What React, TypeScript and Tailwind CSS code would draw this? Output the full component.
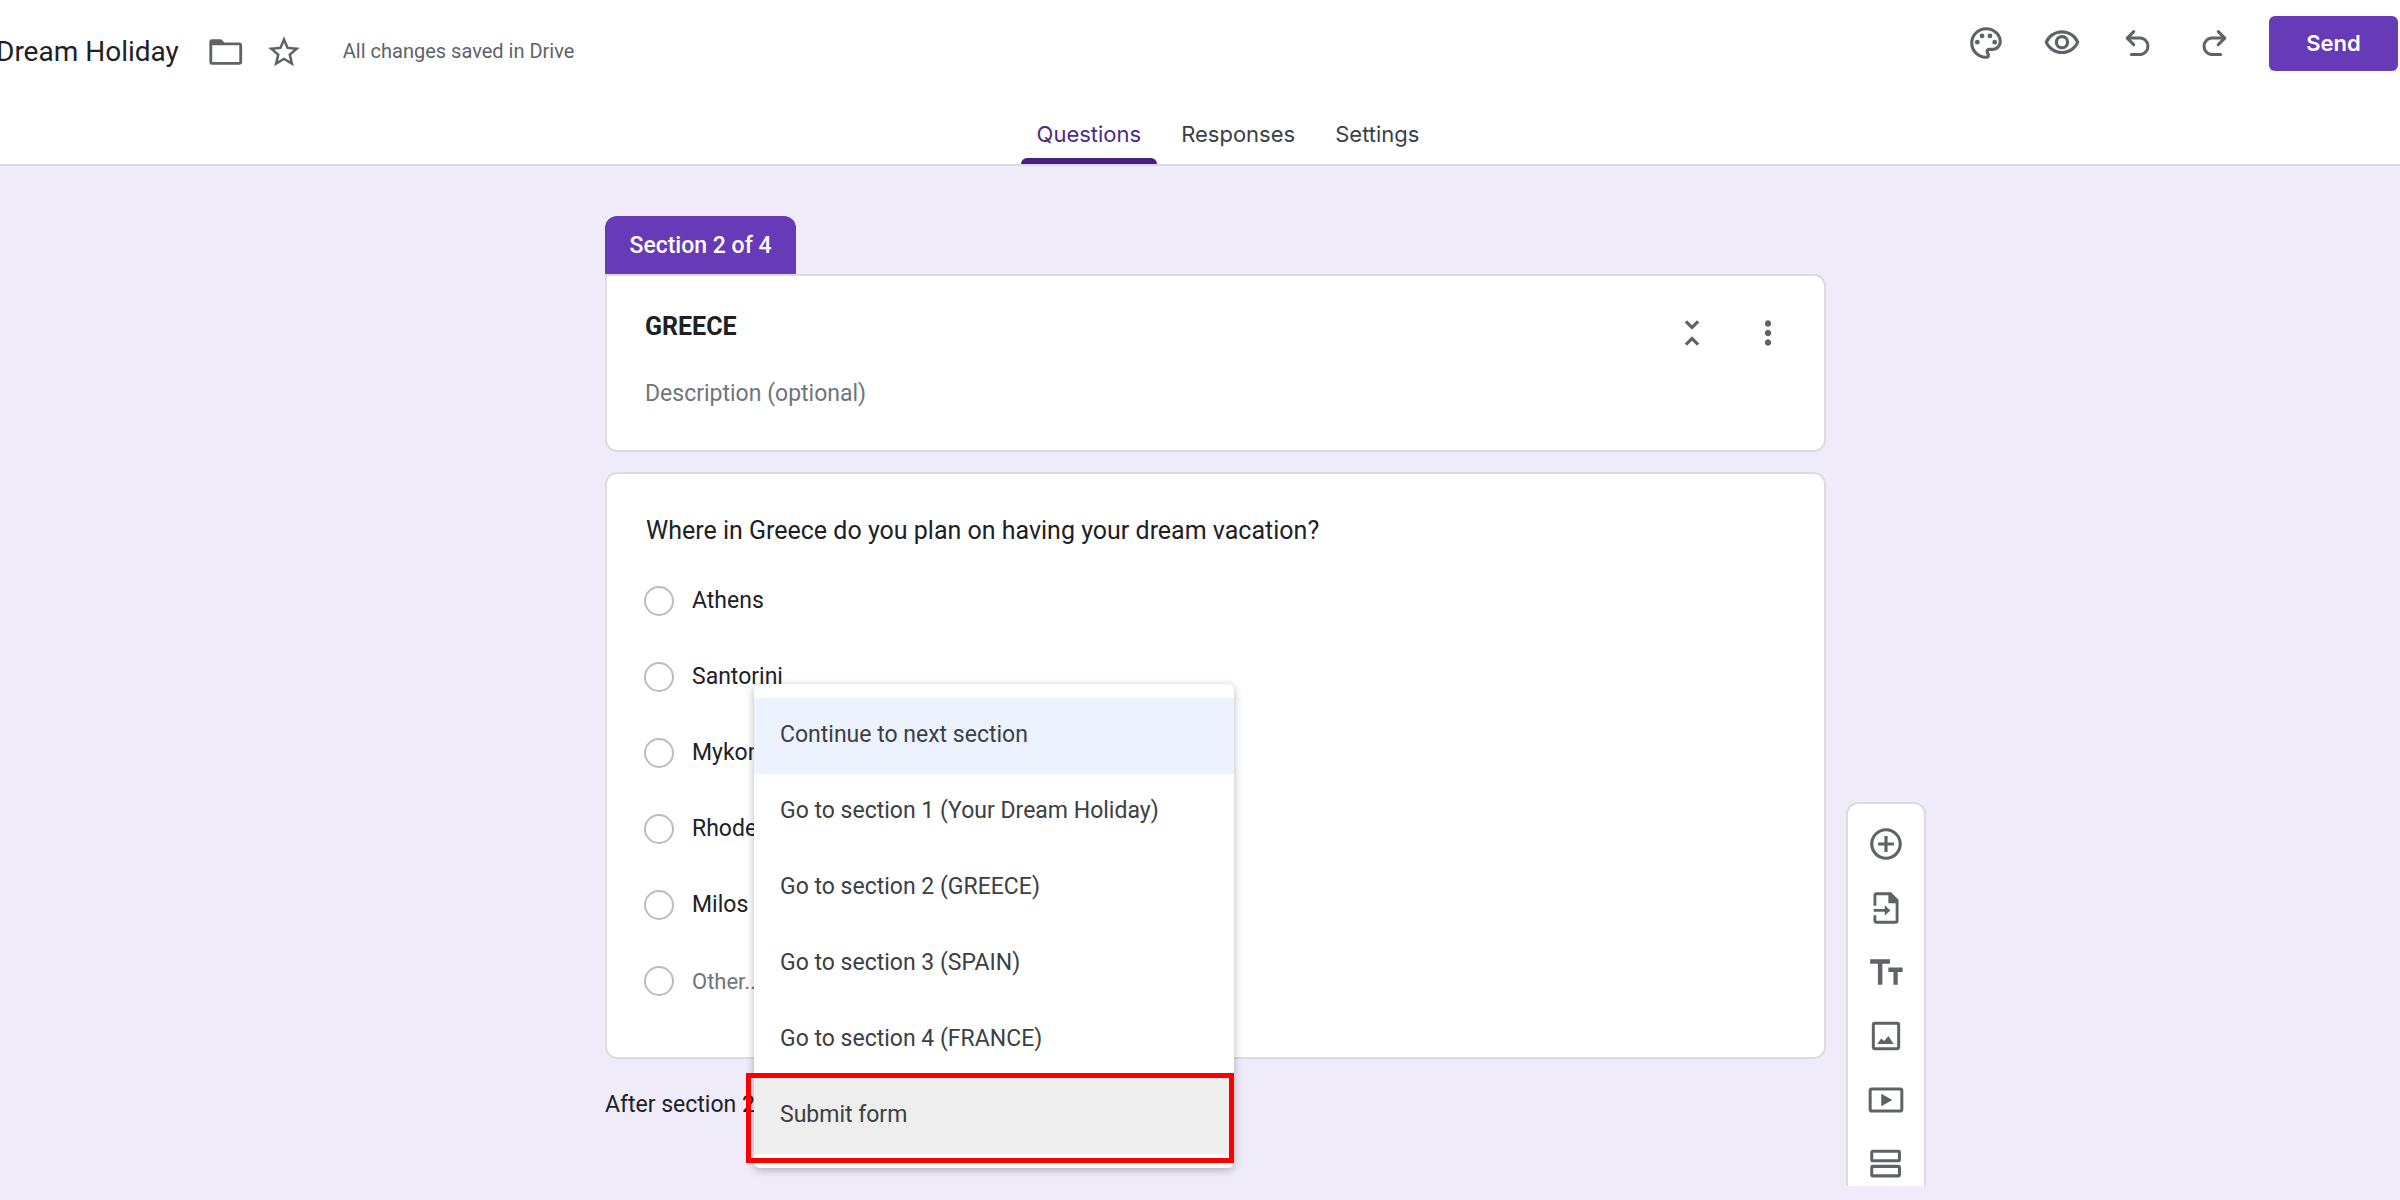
import React from 'react';
import {
  MdStarOutline,
  MdOutlinePalette,
  MdOutlineVisibility,
  MdUnfoldLess,
  MdMoreVert,
  MdAddCircleOutline,
} from 'react-icons/md';

interface IconProps {
  className?: string;
}

const iconSize = 'w-[38px] h-[38px]';

const FolderIcon: React.FC<IconProps> = ({ className }) => (
  <svg viewBox="0 0 24 24" className={className}>
    <path d="M1.500 5.600C1.500 4.700 2.200 4 3.100 4H9l2 2H20.500c.9 0 1.700.8 1.700 1.700V18.500c0 .9-.8 1.600-1.700 1.600H3.100c-.9 0-1.600-.7-1.600-1.600zM3.300 7.800V18.300H20.400V7.800z" fill="currentColor" fillRule="evenodd" />
  </svg>
);

const UndoIcon: React.FC<IconProps> = ({ className }) => (
  <svg viewBox="0 0 24 24" fill="none" stroke="currentColor" strokeWidth="1.9" strokeLinecap="round" strokeLinejoin="round" className={className}>
    <path d="M9.300 4.800 5.200 8.900l4.100 4.100" />
    <path d="M5.400 8.900h8.400a5.200 5.200 0 0 1 0 10.300H7.800" />
  </svg>
);

const RedoIcon: React.FC<IconProps> = ({ className }) => (
  <svg viewBox="0 0 24 24" fill="none" stroke="currentColor" strokeWidth="1.9" strokeLinecap="round" strokeLinejoin="round" className={className}>
    <path d="m14.700 4.800 4.100 4.100-4.100 4.100" />
    <path d="M18.600 8.900h-8.400a5.200 5.200 0 0 0 0 10.300h6" />
  </svg>
);

const ImportIcon: React.FC<IconProps> = ({ className }) => (
  <svg viewBox="0 0 24 24" className={className}>
    <path d="M5 10.500V4a1 1 0 0 1 1-1h8.800L19 7.200V20a1 1 0 0 1-1 1H6a1 1 0 0 1-1-1v-3.500" fill="none" stroke="currentColor" strokeWidth="1.800" />
    <path d="M13.500 2.500V9H20z" fill="currentColor" />
    <path d="M4.200 12.600h7v-2.300l3.600 3.200-3.600 3.200v-2.300h-7z" fill="currentColor" />
  </svg>
);

const TextIcon: React.FC<IconProps> = ({ className }) => (
  <svg viewBox="0 0 24 24" fill="currentColor" className={className}>
    <path d="M2 4v2.800h4.900V20h2.800V6.800h4.800V4zM22.500 9.200h-9V12h3.200v8h2.700v-8h3.100z" />
  </svg>
);

const ImageIcon: React.FC<IconProps> = ({ className }) => (
  <svg viewBox="0 0 24 24" className={className}>
    <rect x="4" y="4" width="16" height="16" rx="1" fill="none" stroke="currentColor" strokeWidth="1.900" />
    <path d="M6.500 17l2.500-3.500 1.900 1.700 2.600-3.200L16.900 17z" fill="currentColor" />
  </svg>
);

const VideoIcon: React.FC<IconProps> = ({ className }) => (
  <svg viewBox="0 0 24 24" className={className}>
    <rect x="2" y="5" width="20" height="14" rx="1" fill="none" stroke="currentColor" strokeWidth="1.900" />
    <path d="M9 8v8l7-4z" fill="currentColor" />
  </svg>
);

const SectionIcon: React.FC<IconProps> = ({ className }) => (
  <svg viewBox="0 0 24 24" fill="none" stroke="currentColor" strokeWidth="1.900" className={className}>
    <rect x="3" y="4" width="17.500" height="6" rx="0.500" />
    <rect x="3" y="13.500" width="17.500" height="6" rx="0.500" />
  </svg>
);

const tabs = ['Questions', 'Responses', 'Settings'];

const options = ['Athens', 'Santorini', 'Mykonos', 'Rhodes', 'Milos', 'Other...'];

const destinations = [
  'Continue to next section',
  'Go to section 1 (Your Dream Holiday)',
  'Go to section 2 (GREECE)',
  'Go to section 3 (SPAIN)',
  'Go to section 4 (FRANCE)',
  'Submit form',
];

const headerActions = [
  { label: 'Customize theme', Icon: MdOutlinePalette },
  { label: 'Preview', Icon: MdOutlineVisibility },
  { label: 'Undo', Icon: UndoIcon },
  { label: 'Redo', Icon: RedoIcon },
];

const tools = [
  { label: 'Add question', Icon: MdAddCircleOutline },
  { label: 'Import questions', Icon: ImportIcon },
  { label: 'Add title and description', Icon: TextIcon },
  { label: 'Add image', Icon: ImageIcon },
  { label: 'Add video', Icon: VideoIcon },
  { label: 'Add section', Icon: SectionIcon },
];

const Header: React.FC = () => (
  <header className="bg-white border-b-2 border-[#dddae3]">
    <div className="flex items-start justify-between h-[104px]">
      <div className="flex items-center h-[104px]">
        <h1 className="-ml-1 text-[28px] leading-8 text-[#202124] whitespace-nowrap">Dream Holiday</h1>
        <button aria-label="Move to folder" className="ml-7 text-[#5f6368]">
          <FolderIcon className={iconSize} />
        </button>
        <button aria-label="Star" className="ml-5 text-[#5f6368]">
          <MdStarOutline className={iconSize} />
        </button>
        <p className="ml-10 pb-0.5 text-xl text-[#5f6368]">All changes saved in Drive</p>
      </div>
      <div className="flex items-start pt-4">
        <div className="flex items-center gap-[38px] h-[55px] pb-0.5 mr-9 text-[#5f6368]">
          {headerActions.map(({ label, Icon }) => (
            <button key={label} aria-label={label}>
              <Icon className={iconSize} />
            </button>
          ))}
        </div>
        <button className="w-[129px] h-[55px] mr-0.5 rounded-md bg-[#673ab7] text-white font-['Inter',sans-serif] font-semibold text-[22px]">
          Send
        </button>
      </div>
    </div>
    <nav className="flex justify-center gap-2 h-[60px] pl-[56px] font-['Inter',sans-serif] text-[22px]">
      {tabs.map((tab, index) => (
        <a
          key={tab}
          href="#"
          className={`flex flex-col justify-between px-4 pt-3 ${index === 0 ? 'text-[#4c2b87]' : 'text-[#3c4043]'}`}
        >
          <span className="leading-9">{tab}</span>
          {index === 0 && <span className="h-1.5 -mx-4 rounded-t-md bg-[#47217f]" />}
        </a>
      ))}
    </nav>
  </header>
);

const SectionCard: React.FC = () => (
  <section>
    <div className="w-[191px] h-[58px] pt-0.5 flex items-center justify-center rounded-t-xl bg-[#673ab7] text-white font-medium text-[23px]">
      Section 2 of 4
    </div>
    <div className="flex justify-between h-[178px] pl-[38px] pr-[37px] bg-white border-2 border-[#dadce0] rounded-xl rounded-tl-none">
      <div className="flex flex-col flex-1 pt-[33px]">
        <h2 className="text-[25px] leading-9 font-bold text-[#202124]">GREECE</h2>
        <input
          aria-label="Description"
          placeholder="Description (optional)"
          className="mt-7 h-10 w-full text-[23px] outline-none placeholder:text-[#70757a]"
        />
      </div>
      <div className="flex items-start gap-[38px] pt-[38px] text-[#5f6368]">
        <button aria-label="Collapse section">
          <MdUnfoldLess className={iconSize} />
        </button>
        <button aria-label="More options">
          <MdMoreVert className={iconSize} />
        </button>
      </div>
    </div>
  </section>
);

const QuestionCard: React.FC = () => (
  <fieldset className="mt-5 pl-[37px] pt-[37px] pb-[38px] bg-white border-2 border-[#dadce0] rounded-xl text-[#202124]">
    <p className="pl-0.5 text-[25px] leading-10">Where in Greece do you plan on having your dream vacation?</p>
    <div className="mt-3">
      {options.map((option) => (
        <label key={option} className="flex items-center gap-[18px] h-[76px]">
          <input type="radio" name="place" className="appearance-none w-[30px] h-[30px] rounded-full border-2 border-[#bdbdbd]" />
          <span className={option === 'Other...' ? 'text-[22px] text-[#70757a]' : 'text-[23px]'}>{option}</span>
        </label>
      ))}
    </div>
  </fieldset>
);

const DestinationMenu: React.FC = () => (
  <ul className="absolute left-[149px] bottom-[-39px] w-[480px] py-3.5 bg-white rounded-md shadow-[0_2px_8px_rgba(0,0,0,0.28)]">
    {destinations.map((item, index) => (
      <li key={item}>
        <button
          className={`block w-full h-[76px] pl-[26px] pb-0.5 text-left text-[23px] text-[#3c4043] ${index === 0 ? 'bg-[#ecf3fe]' : ''} ${index === 5 ? 'bg-[#eeeeee]' : ''}`}
        >
          {item}
        </button>
      </li>
    ))}
    <li aria-hidden="true" className="absolute -left-2 right-0 bottom-[5px] h-[90px] border-[5px] border-[#fa0000] pointer-events-none" />
  </ul>
);

const Toolbar: React.FC = () => (
  <aside className="self-start w-20 h-[384px] ml-5 mt-[636px] pt-[21px] flex flex-col items-center gap-[26px] bg-white rounded-t-xl border-2 border-b-0 border-[#dadce0] text-[#5f6368]">
    {tools.map(({ label, Icon }) => (
      <button key={label} aria-label={label}>
        <Icon className={iconSize} />
      </button>
    ))}
  </aside>
);

export default function App() {
  return (
    <div className="min-h-screen overflow-hidden bg-[#f0ebf8] font-['Roboto',sans-serif]">
      <Header />
      <main className="grid grid-cols-[1fr_minmax(0,1221px)_1fr] pl-[31px]">
        <div className="col-start-2 pt-[50px]">
          <SectionCard />
          <QuestionCard />
          <div className="relative mt-[22px] h-12 flex items-center text-[23px] text-[#202124]">
            <span>After section 2</span>
            <DestinationMenu />
          </div>
        </div>
        <Toolbar />
      </main>
    </div>
  );
}
